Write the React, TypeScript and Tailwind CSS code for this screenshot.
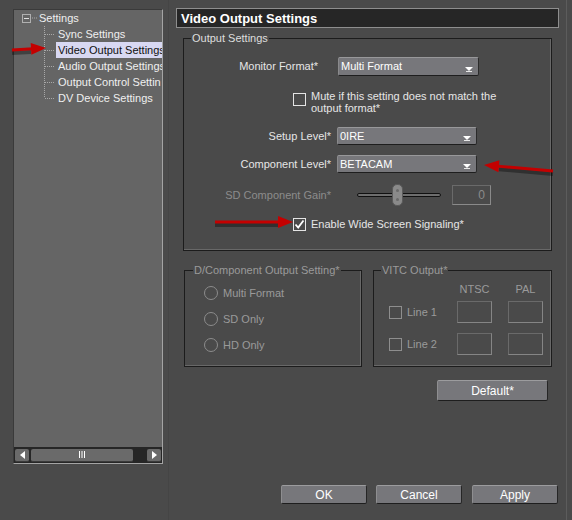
import React from 'react'

const btn =
  'flex items-center justify-center bg-[#77777b] text-white text-[12px] rounded-[2px] border border-t-[#9c9c9e] border-l-[#8e8e90] border-r-[#262626] border-b-[#1e1e1e]'

function Arrow() {
  return (
    <svg width="10" height="7" viewBox="0 0 10 7">
      <path d="M1 1 L9 1 L5 5 Z" fill="#fff" />
      <rect x="2" y="5" width="6" height="1" fill="#e8e8e8" />
    </svg>
  )
}

function Select({ value, w, h }: { value: string; w: string; h: string }) {
  return (
    <div
      className={`${w} ${h} flex items-center justify-between pl-[2px] pr-[4px] bg-[#77777b] rounded-[2px] border border-t-[#98989a] border-l-[#8a8a8c] border-r-[#2a2a2a] border-b-[#1e1e1e] text-white`}
    >
      <span>{value}</span>
      <span className="mt-[5px]">
        <Arrow />
      </span>
    </div>
  )
}

function Check({ checked, dim }: { checked?: boolean; dim?: boolean }) {
  return (
    <div
      className={`w-[13px] h-[13px] shrink-0 border ${dim ? 'border-[#8e8e8e]' : 'border-[#e4e4e4]'} flex items-center justify-center`}
    >
      {checked && (
        <svg width="11" height="11" viewBox="0 0 11 11">
          <path d="M1.5 5.5 L4.2 8.5 L9.5 1.5" stroke="#fff" strokeWidth="1.8" fill="none" />
        </svg>
      )}
    </div>
  )
}

function Radio() {
  return <div className="w-[14px] h-[14px] rounded-full border border-[#8c8c8c] shrink-0" />
}

function TreeLink({ last }: { last?: boolean }) {
  return (
    <svg width="12" height="16" className="shrink-0">
      <line x1="0.5" y1="0" x2="0.5" y2={last ? 8 : 16} stroke="#a8a8a8" strokeDasharray="1 1" />
      <line x1="1" y1="8.5" x2="10" y2="8.5" stroke="#a8a8a8" strokeDasharray="1 1" />
    </svg>
  )
}

function RedArrow({ x1, y1, x2, y2 }: { x1: number; y1: number; x2: number; y2: number }) {
  const ang = Math.atan2(y2 - y1, x2 - x1)
  const len = 15
  const hw = 6
  const bx = x2 - Math.cos(ang) * len
  const by = y2 - Math.sin(ang) * len
  const px = -Math.sin(ang) * hw
  const py = Math.cos(ang) * hw
  return (
    <g>
      <line x1={x1} y1={y1 + 3} x2={bx} y2={by + 3} stroke="rgba(0,0,0,0.35)" strokeWidth="4" />
      <line x1={x1} y1={y1} x2={bx + Math.cos(ang) * 2} y2={by + Math.sin(ang) * 2} stroke="#c40000" strokeWidth="3" />
      <polygon
        points={`${x2},${y2} ${bx + px},${by + py} ${bx - px},${by - py}`}
        fill="#c40000"
      />
    </g>
  )
}

export default function App() {
  const tree = ['Sync Settings', 'Video Output Settings', 'Audio Output Settings', 'Output Control Settin', 'DV Device Settings']

  return (
    <div className="relative w-[572px] h-[520px] overflow-hidden bg-[#4a4a4a] flex font-['Liberation_Sans',Arial,sans-serif] text-[11px] text-[#e6e6e6] leading-none">
      {/* Left tree */}
      <div className="w-[168px] shrink-0 pl-[13px] pt-[9px]">
        <div className="w-[150px] h-[455px] bg-[#656565] border border-t-[#3a3a3a] border-l-[#3a3a3a] border-r-[#a4a4a4] border-b-[#a4a4a4] flex flex-col">
          <div className="flex-1 overflow-hidden">
            <div className="flex items-center h-[16px]">
              <div className="ml-[8px] w-[9px] h-[9px] border border-[#b0b0b0] flex items-center justify-center">
                <div className="w-[5px] h-px bg-[#e0e0e0]" />
              </div>
              <svg width="6" height="2" className="ml-[1px]">
                <line x1="0" y1="1" x2="5" y2="1" stroke="#a8a8a8" strokeDasharray="1 1" />
              </svg>
              <span className="ml-[1px] text-[#f0f0f0]">Settings</span>
            </div>
            {tree.map((t, i) => (
              <div key={t} className="flex items-center h-[16px]">
                <div className="w-[30px] shrink-0" />
                <TreeLink last={i === tree.length - 1} />
                {i === 1 ? (
                  <span className="h-[16px] flex items-center pl-[2px] pr-[4px] bg-[#d8d8f2] text-[#101010] whitespace-nowrap">
                    {t}
                  </span>
                ) : (
                  <span className="pl-[2px] whitespace-nowrap text-[#f0f0f0]">{t}</span>
                )}
              </div>
            ))}
          </div>
          {/* scrollbar */}
          <div className="h-[16px] bg-[#262626] flex items-center px-[1px] gap-[2px]">
            <div className="w-[14px] h-[13px] rounded-[2px] bg-[#6a6a6a] border-b border-[#3a3a3a] flex items-center justify-center">
              <svg width="5" height="8"><path d="M5 0 L0 4 L5 8 Z" fill="#fff" /></svg>
            </div>
            <div className="w-[102px] h-[13px] rounded-[2px] bg-[#6a6a6a] border-b border-[#3a3a3a] flex items-center justify-center">
              <svg width="6" height="7">
                <rect x="0" y="0" width="1" height="7" fill="#fff" />
                <rect x="2.5" y="0" width="1" height="7" fill="#fff" />
                <rect x="5" y="0" width="1" height="7" fill="#fff" />
              </svg>
            </div>
            <div className="flex-1" />
            <div className="w-[14px] h-[13px] rounded-[2px] bg-[#6a6a6a] border-b border-[#3a3a3a] flex items-center justify-center">
              <svg width="5" height="8"><path d="M0 0 L5 4 L0 8 Z" fill="#fff" /></svg>
            </div>
          </div>
        </div>
      </div>

      {/* Right side */}
      <div className="w-[399px] shrink-0 border-l border-[#454545] border-r border-r-[#5c5c5c] flex flex-col">
        <div className="ml-[7px] mt-[8px] w-[383px] h-[20px] bg-[#262626] border border-[#8e8e8e] flex items-center pl-[4px] text-white font-bold text-[13px]">
          Video Output Settings
        </div>

        {/* Output settings group */}
        <div className="relative ml-[14px] mt-[10px] w-[369px] h-[213px] border border-[#1c1c1c] shadow-[inset_-1px_-1px_0_#686868] pt-[18px]">
          <span className="absolute -top-[7px] left-[7px] px-[1px] bg-[#4a4a4a] text-[#dedede] leading-[13px]">
            Output Settings
          </span>

          <div className="flex items-center">
            <div className="w-[134px] text-right">Monitor Format*</div>
            <div className="ml-[20px]">
              <Select value="Multi Format" w="w-[141px]" h="h-[19px]" />
            </div>
          </div>

          <div className="flex items-start mt-[14px] ml-[109px]">
            <div className="mt-[3px]">
              <Check />
            </div>
            <div className="ml-[5px] leading-[12px]">
              Mute if this setting does not match the
              <br />
              output format*
            </div>
          </div>

          <div className="flex items-center mt-[13px]">
            <div className="w-[147px] text-right">Setup Level*</div>
            <div className="ml-[6px]">
              <Select value="0IRE" w="w-[140px]" h="h-[18px]" />
            </div>
          </div>

          <div className="flex items-center mt-[10px]">
            <div className="w-[147px] text-right">Component Level*</div>
            <div className="ml-[6px]">
              <Select value="BETACAM" w="w-[140px]" h="h-[18px]" />
            </div>
          </div>

          <div className="flex items-center mt-[12px] h-[20px]">
            <div className="w-[147px] text-right text-[#8c8c8c]">SD Component Gain*</div>
            <div className="ml-[26px] w-[84px] h-[20px] flex items-center relative">
              <div className="w-full h-[4px] bg-[#6e6e6e] border border-[#111] rounded-[2px]" />
              <div className="absolute left-[35px] -top-[1px] w-[11px] h-[22px] rounded-[5px] bg-[#8a8a8a] border border-[#5a5a5a] flex flex-col items-center justify-between py-[4px]">
                <div className="w-[3px] h-[3px] rounded-full bg-[#6a6a6a]" />
                <div className="w-[3px] h-[3px] rounded-full bg-[#6a6a6a]" />
              </div>
            </div>
            <div className="ml-[11px] w-[39px] h-[20px] border border-[#8a8a8a] border-t-[#6a6a6a] border-l-[#6a6a6a] flex items-center justify-end pr-[5px] text-[#8a8a8a] text-[12px]">
              0
            </div>
          </div>

          <div className="flex items-center mt-[13px] ml-[109px]">
            <Check checked />
            <div className="ml-[5px]">Enable Wide Screen Signaling*</div>
          </div>
        </div>

        {/* Lower groups */}
        <div className="flex ml-[15px] mt-[19px] gap-[11px]">
          <div className="relative w-[178px] h-[97px] border border-[#1c1c1c] shadow-[inset_-1px_-1px_0_#686868] pt-[14px] pl-[19px] flex flex-col gap-[10px] text-[#9a9a9a]">
            <span className="absolute -top-[7px] left-[8px] px-[1px] bg-[#4a4a4a] leading-[13px]">
              D/Component Output Setting*
            </span>
            {['Multi Format', 'SD Only', 'HD Only'].map(r => (
              <div key={r} className="flex items-center h-[16px]">
                <Radio />
                <span className="ml-[5px]">{r}</span>
              </div>
            ))}
          </div>

          <div className="relative w-[179px] h-[97px] border border-[#1c1c1c] shadow-[inset_-1px_-1px_0_#686868] pt-[12px] text-[#9a9a9a]">
            <span className="absolute -top-[7px] left-[7px] px-[1px] bg-[#4a4a4a] leading-[13px]">
              VITC Output*
            </span>
            <div className="flex pl-[83px] h-[12px] items-center">
              <div className="w-[35px] text-center">NTSC</div>
              <div className="ml-[16px] w-[35px] text-center">PAL</div>
            </div>
            {['Line 1', 'Line 2'].map((l, i) => (
              <div key={l} className={`flex items-center h-[22px] pl-[15px] ${i === 0 ? 'mt-[6px]' : 'mt-[10px]'}`}>
                <Check dim />
                <div className="ml-[5px] w-[50px]">{l}</div>
                <div className="w-[35px] h-[22px] border border-[#858585] border-t-[#6a6a6a] border-l-[#6a6a6a]" />
                <div className="ml-[16px] w-[35px] h-[22px] border border-[#858585] border-t-[#6a6a6a] border-l-[#6a6a6a]" />
              </div>
            ))}
          </div>
        </div>

        <div className="ml-[268px] mt-[13px]">
          <div className={`${btn} w-[111px] h-[21px]`}>Default*</div>
        </div>

        <div className="flex ml-[112px] mt-[84px] gap-[9px]">
          <div className={`${btn} w-[86px] h-[19px]`}>OK</div>
          <div className={`${btn} w-[86px] h-[19px]`}>Cancel</div>
          <div className={`${btn} w-[86px] h-[19px] ml-[1px]`}>Apply</div>
        </div>
      </div>

      {/* Annotation arrows */}
      <svg className="absolute inset-0 pointer-events-none" width="572" height="520">
        <RedArrow x1={12} y1={50} x2={46} y2={48} />
        <RedArrow x1={553} y1={171} x2={484} y2={165} />
        <RedArrow x1={215} y1={222} x2={293} y2={222} />
      </svg>
    </div>
  )
}
